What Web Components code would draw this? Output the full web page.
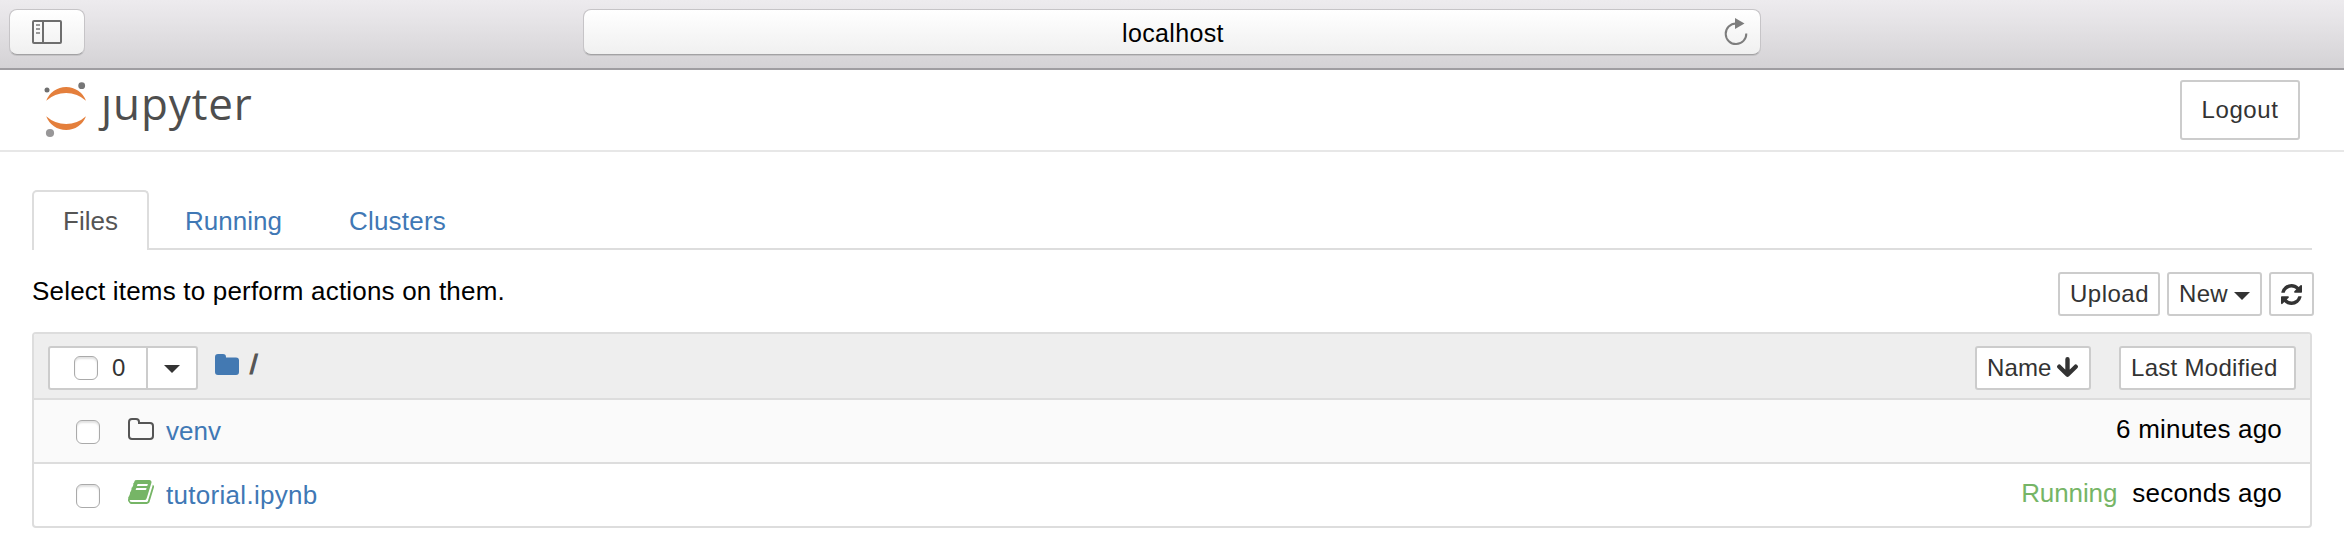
<!DOCTYPE html>
<html lang="en"><head><meta charset="utf-8"><title>Home</title>
<style>
html,body{margin:0;height:558px;overflow:hidden;background:#fff}
body{font-family:"Liberation Sans",Arial,sans-serif;font-size:26px;line-height:36px;color:#000}
</style></head><body>
<jp-app></jp-app>
<script>
const define=(name,html)=>customElements.define(name,class extends HTMLElement{
  constructor(){super();this.attachShadow({mode:'open'}).innerHTML=html;}
});

define('safari-bar',`<style>
:host{display:flex;box-sizing:border-box;height:70px;padding:9px 0 0 9px;background:linear-gradient(#edebee,#e6e4e7 30%,#d4d2d5);border-bottom:2px solid #9f9da1}
.b{box-sizing:border-box;height:46px;border:1px solid #c6c4c7;border-bottom-color:#a3a2a4;border-radius:8px;background:linear-gradient(#fff,#f0f0f0);box-shadow:0 1px 0 #c4c3c5;display:flex;align-items:center;justify-content:center}
.side{width:76px}
.addr{width:1178px;margin-left:498px;display:grid;grid-template-columns:50px 1fr 50px;justify-items:center}
.addr span{font-size:25px;letter-spacing:.35px;line-height:44px;padding:1px 0 0 2px}
.addr svg{margin-left:1px}
svg{display:block}
</style>
<div class="b side"><svg width="30" height="24" viewBox="0 0 30 24" fill="none" stroke="#6e6e6e" stroke-width="2"><rect x="1" y="1" width="28" height="22" rx="1"/><path d="M11 1v22"/><path stroke="#999" d="M4 5h4M4 9h4M4 13h4"/></svg></div>
<div class="b addr"><i></i><span>localhost</span><svg width="24" height="36" viewBox="0 0 24 36"><path d="M12 8.500A10.300 10.300 0 1 0 22.300 18.500" fill="none" stroke="#7d7d7d" stroke-width="2"/><path d="M11 3l9.500 5.500-9.500 5.500z" fill="#7d7d7d"/></svg></div>`);

define('jp-logo',`<style>
:host{display:flex}
svg{display:block;flex:none}
.w{font:44px/60px "Open Sans","Noto Sans",sans-serif;color:#4e4e4e;letter-spacing:.9px;white-space:nowrap;margin:-7px 0 0 11px;height:60px}
.j{display:inline-block;clip-path:inset(21px -10px -10px -20px)}
</style>
<svg width="46" height="60" viewBox="0 0 46 60"><g fill="#e47f3c"><path d="M2.200 20.800A21.200 21.200 0 0 1 42 20.800A29.500 29.500 0 0 0 2.200 20.800z"/><path d="M2.200 36.200A21.200 21.200 0 0 0 42 36.200A29.500 29.500 0 0 1 2.200 36.200z"/></g><circle cx="3" cy="10" r="2.500" fill="#6f6f6f"/><circle cx="37.700" cy="5.700" r="3.400" fill="#767677"/><circle cx="6" cy="53" r="4.100" fill="#989798"/></svg>
<span class="w"><span class="j">j</span>upyter</span>`);

define('jp-button',`<style>
:host{display:flex;box-sizing:border-box;align-items:center;height:44px;border:2px solid #ccc;border-radius:3px;background:#fff;color:#333;font-size:24px;letter-spacing:.3px;padding:0 10px;white-space:nowrap}
</style><slot></slot>`);

define('jp-header',`<style>
:host{display:flex;box-sizing:border-box;justify-content:space-between;align-items:flex-start;height:82px;padding:10px 44px 0 44px;border-bottom:2px solid #e7e7e7}
jp-button{height:60px;width:120px;padding:0;justify-content:center;letter-spacing:.6px}
</style><jp-logo></jp-logo><jp-button>Logout</jp-button>`);

define('jp-tabs',`<style>
:host{display:flex;height:60px;margin:38px 32px 0;box-shadow:inset 0 -2px #ddd;color:#4078b5}
div{box-sizing:border-box;height:60px;line-height:60px;padding-top:1px}
.on{width:117px;border:2px solid #ddd;border-bottom:0;border-radius:5px 5px 0 0;background:#fff;color:#555;line-height:58px;padding:0 0 0 29px}
.r{padding-left:36px;width:165px}.c{padding-left:35px;letter-spacing:.2px}
</style><div class="on">Files</div><div class="r">Running</div><div class="c">Clusters</div>`);

define('jp-caret',`<style>:host{display:block;width:0;border:8px solid transparent;border-top-color:currentColor;border-bottom:0}</style>`);

define('jp-actions',`<style>
:host{display:flex;gap:7px;padding:22px 30px 0 32px;height:60px}
p{margin:1px auto 0 0;letter-spacing:.19px}
jp-button{box-sizing:border-box}
.u{width:102px;letter-spacing:.5px}.n{width:95px}.n jp-caret{margin:4px 0 0 6px}.s{width:45px}
svg{display:block}
</style><p>Select items to perform actions on them.</p>
<jp-button class="u">Upload</jp-button><jp-button class="n">New<jp-caret></jp-caret></jp-button>
<jp-button class="s"><svg width="21" height="21" viewBox="0 0 1536 1536" fill="currentColor"><path d="M1511 928q0 5-1 7-64 268-268 434.500T764 1536q-146 0-282.500-55T238 1324l-129 129q-19 19-45 19t-45-19-19-45V960q0-26 19-45t45-19h448q26 0 45 19t19 45-19 45l-137 137q71 66 161 102t187 36q134 0 250-65t186-179q11-17 53-117 8-23 30-23h192q13 0 22.500 9.500t9.500 22.500zm25-800v448q0 26-19 45t-45 19h-448q-26 0-45-19t-19-45 19-45l138-138Q969 256 768 256q-134 0-250 65T332 500q-11 17-53 117-8 23-30 23H50q-13 0-22.500-9.500T18 608v-7q65-268 270-434.500T768 0q146 0 284 55.500T1297 212l130-129q19-19 45-19t45 19 19 45z"/></svg></jp-button>`);

define('jp-check',`<style>:host{display:block;box-sizing:border-box;flex:none;width:24px;height:24px;border:1.500px solid #aaa;border-radius:6px;background:#fff;box-shadow:inset 0 2px 2px #e2e2e2}</style>`);

define('jp-row',`<style>
:host{display:flex;box-sizing:border-box;height:64px;border-top:2px solid #ddd;padding:0 28px 0 42px}
jp-check{margin-top:20px}
.i{width:26px;margin:16px 12px 0 28px}.n{margin-top:13px;color:#4078b5}.t{margin:11px 0 0 auto;letter-spacing:.2px}
</style><jp-check></jp-check><div class="i"><slot name="icon"></slot></div><div class="n"><slot name="name"></slot></div><div class="t"><slot></slot></div>`);

define('jp-list',`<style>
:host{display:block;box-sizing:border-box;margin:0 32px;width:2280px;height:196px;border:2px solid #ddd;border-radius:4px;overflow:hidden}
.h{display:flex;height:64px;background:#eee;padding:0 14px;align-items:flex-start;box-sizing:border-box}
.h>*{margin-top:12px}
.sel{width:100px;padding:0 0 0 24px;border-radius:3px 0 0 3px;letter-spacing:0}.sel jp-check{margin-right:14px}
.dd{width:52px;margin-left:-2px;padding:2px 0 0;justify-content:center;border-radius:0 3px 3px 0}
.f{margin:20px 0 0 17px}.sl{color:#555;margin:13px auto 0 11px;font-size:27px;-webkit-text-stroke:1.2px #555}
.nm{width:116px;letter-spacing:.1px}.nm svg{margin:-2px 0 0 6px}.lm{width:177px;margin-left:28px}
svg{display:block}
.run{color:#76b566;margin-right:15px;letter-spacing:-.1px}
</style>
<div class="h"><jp-button class="sel"><jp-check></jp-check>0</jp-button><jp-button class="dd"><jp-caret></jp-caret></jp-button>
<svg class="f" width="24" height="21" viewBox="0 0 24 21"><path fill="#4379b2" d="M3 0h5q3 0 3 3v.5h10q3 0 3 3V18q0 3-3 3H3q-3 0-3-3V3q0-3 3-3z"/></svg><span class="sl">/</span>
<jp-button class="nm">Name<svg width="21" height="21" viewBox="0 0 21 21"><path d="M10.500 2.300v14M2.300 9.700l8.200 8L18.700 9.700" fill="none" stroke="#333" stroke-width="4.400" stroke-linecap="round" stroke-linejoin="round"/></svg></jp-button><jp-button class="lm">Last Modified</jp-button></div>
<jp-row style="background:#fafafa"><svg slot="icon" style="margin-top:2px" width="26" height="22" viewBox="0 0 26 22"><path d="M1 4q0-3 3-3h4q3 0 3 3v1h11q3 0 3 3v10q0 3-3 3H4q-3 0-3-3z" fill="none" stroke="#555" stroke-width="2"/></svg><span slot="name">venv</span>6 minutes ago</jp-row>
<jp-row><svg slot="icon" width="26" height="24" viewBox="0 0 1664 1536"><path fill="#76b566" d="M1639 350q40 57 18 129l-275 906q-19 64-76.500 107.500T1183 1536H260q-77 0-148.500-53.500T12 1351q-24-67-2-127 0-4 3-27t4-37q1-8-3-21.500t-3-19.500q2-11 8-21t16.500-23.500T52 1051q23-38 45-91.500t30-91.500q3-10 .5-30t-.5-28q3-11 17-28t17-23q21-36 42-92t25-90q1-9-2.500-32t.5-28q4-13 22-30.500t22-22.500q19-26 42.500-84.500T340 283q1-8-3-25.500t-2-26.500q2-8 9-18t18-23 17-21q8-12 16.500-30.500t15-35 16-36 19.500-32T469.500 12t36-11.500T553 6l-1 3q38-9 51-9h761q74 0 114 56t18 130l-274 906q-36 119-71.500 153.500T1022 1280H153q-27 0-38 15-11 16-1 43 24 70 144 70h923q29 0 56-15.500t35-41.500l300-987q7-22 5-57 38 15 59 43zM575 352q-4 13 2 22.500t20 9.500h608q13 0 25.500-9.500T1247 352l21-64q4-13-2-22.500t-20-9.500H638q-13 0-25.500 9.500T596 288zm-83 256q-4 13 2 22.500t20 9.500h608q13 0 25.500-9.500T1164 608l21-64q4-13-2-22.500t-20-9.500H555q-13 0-25.500 9.500T513 544z"/></svg><span slot="name" style="letter-spacing:.3px">tutorial.ipynb</span><span class="run">Running</span>seconds ago</jp-row>`);

define('jp-app',`<style>:host{display:block;width:2344px}</style><safari-bar></safari-bar><jp-header></jp-header><jp-tabs></jp-tabs><jp-actions></jp-actions><jp-list></jp-list>`);
</script></body></html>
